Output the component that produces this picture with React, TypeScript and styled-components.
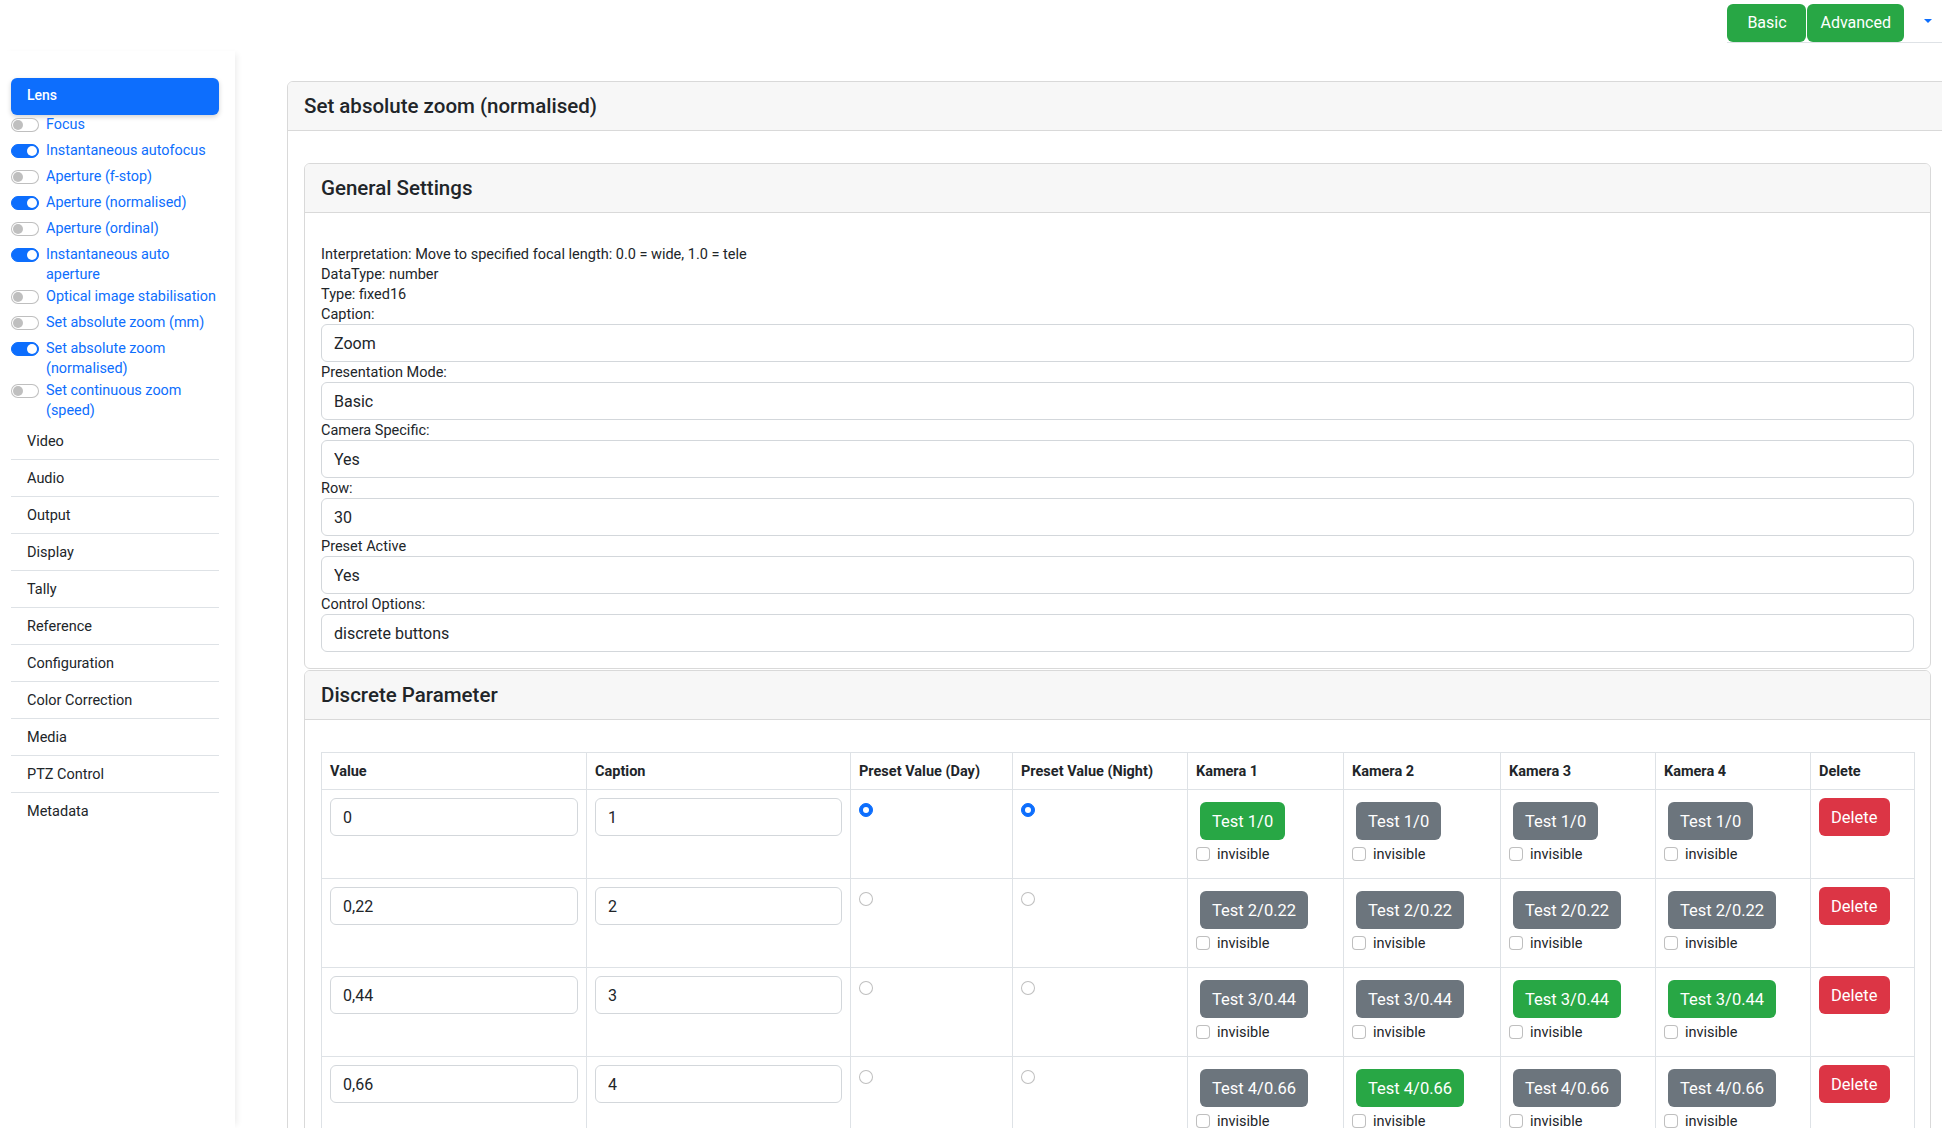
import React from "react";
import styled, { createGlobalStyle } from "styled-components";

const GlobalStyle = createGlobalStyle`
  html, body {
    margin: 0;
    padding: 0;
    overflow: hidden;
    background: #fff;
  }
  body {
    font-family: Roboto, "Liberation Sans", Arial, sans-serif;
    color: #212529;
  }
  * {
    box-sizing: border-box;
  }
`;

const TopBar = styled.header`
  display: flex;
  justify-content: flex-end;
  height: 51px;
`;

const ModeGroup = styled.div`
  display: flex;
  align-items: flex-start;
  gap: 1px;
  height: 43px;
  padding-top: 4px;
  border-bottom: 1px solid #dee2e6;
`;

const ModeButton = styled.button`
  height: 38px;
  min-width: 79px;
  padding: 0 13px;
  border: 0;
  border-radius: 6px;
  background: #28a745;
  color: #fff;
  font: 400 16px/1 Roboto, sans-serif;
`;

const CaretToggle = styled.span`
  display: flex;
  align-items: center;
  height: 34px;
  padding: 0 10px 0 19px;
  &::after {
    content: "";
    border-top: 4px solid #0d6efd;
    border-left: 4px solid transparent;
    border-right: 4px solid transparent;
  }
`;

const Layout = styled.div`
  display: flex;
  align-items: flex-start;
`;

const Sidebar = styled.aside`
  flex: none;
  width: 235px;
  min-height: calc(100vh - 51px);
  padding: 27px 16px 0 11px;
  box-shadow: 5px 0 6px -3px rgba(0, 0, 0, 0.07);
`;

const ActiveSection = styled.div`
  height: 37px;
  line-height: 35px;
  padding: 0 16px 2px;
  border-radius: 6px;
  background: #0d6efd;
  color: #fff;
  font-size: 14px;
  font-weight: 500;
  box-shadow: 0 2px 5px rgba(0, 0, 0, 0.18);
`;

const SwitchRow = styled.label`
  display: flex;
  align-items: flex-start;
  gap: 7px;
  min-height: 24px;
  margin-bottom: 2px;
  font-size: 14.4px;
  line-height: 20px;
  color: #0d6efd;
`;

const Switch = styled.span<{ $on: boolean }>`
  flex: none;
  display: flex;
  align-items: center;
  justify-content: ${(p) => (p.$on ? "flex-end" : "flex-start")};
  width: 28px;
  height: 14px;
  margin-top: 3px;
  padding: 0 1px;
  border-radius: 7px;
  border: 1px solid ${(p) => (p.$on ? "#0d6efd" : "rgba(0,0,0,.25)")};
  background: ${(p) => (p.$on ? "#0d6efd" : "#fff")};
  &::after {
    content: "";
    width: 10px;
    height: 10px;
    border-radius: 50%;
    background: ${(p) => (p.$on ? "#fff" : "rgba(0,0,0,.25)")};
  }
`;

const NavList = styled.div`
  margin-top: 2px;
`;

const NavItem = styled.div`
  display: flex;
  align-items: center;
  height: 37px;
  padding-left: 16px;
  font-size: 14.5px;
  border-bottom: 1px solid #dee2e6;
  &:last-child {
    border-bottom: 0;
  }
`;

const Main = styled.main`
  flex: none;
  padding: 30px 0 0 52px;
`;

const Card = styled.section<{ $width?: number; $gap?: number }>`
  width: ${(p) => (p.$width ? `${p.$width}px` : "auto")};
  margin-top: ${(p) => p.$gap ?? 0}px;
  border: 1px solid #d9d9d9;
  border-radius: 6px;
  background: #fff;
`;

const CardHeader = styled.div`
  padding: 12px 16px;
  border-bottom: 1px solid #d9d9d9;
  border-radius: 5px 5px 0 0;
  background: #f7f7f7;
  font-size: 20.5px;
  font-weight: 500;
  line-height: 24px;
`;

const CardBody = styled.div<{ $top?: number }>`
  padding: ${(p) => p.$top ?? 16}px 16px 16px;
`;

const InfoBlock = styled.div`
  padding-top: 1px;
  margin-bottom: -1px;
`;

const InfoLine = styled.div`
  font-size: 14.5px;
  line-height: 20px;
`;

const FieldLabel = styled.label`
  display: block;
  padding-top: 2px;
  font-size: 14.5px;
  line-height: 18px;
`;

const TextInput = styled.input`
  display: block;
  width: 100%;
  height: 38px;
  padding: 0 12px;
  border: 1px solid #d3d7db;
  border-radius: 6px;
  background: #fff;
  color: #212529;
  font: 400 16px Roboto, sans-serif;
`;

const Table = styled.table`
  width: 100%;
  border-collapse: collapse;
  table-layout: fixed;
  font-size: 14.5px;
`;

const Th = styled.th<{ $w: number }>`
  width: ${(p) => p.$w}px;
  padding: 9px 8px 7px;
  line-height: 20px;
  text-align: left;
  font-weight: 700;
  border: 1px solid #dee2e6;
`;

const Row = styled.tr`
  height: 89px;
`;

const Td = styled.td`
  vertical-align: top;
  padding: 8px;
  border: 1px solid #dee2e6;
`;

const Radio = styled.span<{ $on: boolean }>`
  display: flex;
  align-items: center;
  justify-content: center;
  width: 14px;
  height: 14px;
  margin-top: 5px;
  border-radius: 50%;
  border: 1px solid ${(p) => (p.$on ? "#0d6efd" : "rgba(0,0,0,.25)")};
  background: ${(p) => (p.$on ? "#0d6efd" : "#fff")};
  &::after {
    content: "";
    display: ${(p) => (p.$on ? "block" : "none")};
    width: 6px;
    height: 6px;
    border-radius: 50%;
    background: #fff;
  }
`;

const variants = {
  success: "#28a745",
  secondary: "#6c757d",
  danger: "#dc3545",
};

const Btn = styled.button<{ $variant: keyof typeof variants; $spaced?: boolean }>`
  display: block;
  height: 38px;
  margin: ${(p) => (p.$spaced ? "4px" : "0")};
  padding: 0 12px;
  border: 0;
  border-radius: 6px;
  background: ${(p) => variants[p.$variant]};
  color: #fff;
  font: 400 16.5px Roboto, sans-serif;
  white-space: nowrap;
`;

const CheckLine = styled.label`
  display: flex;
  align-items: center;
  gap: 7px;
  height: 20px;
  font-size: 14.5px;
`;

const CheckBox = styled.span`
  flex: none;
  width: 14px;
  height: 14px;
  border: 1px solid rgba(0, 0, 0, 0.25);
  border-radius: 4px;
  background: #fff;
`;

const lensItems = [
  { name: "Focus", on: false },
  { name: "Instantaneous autofocus", on: true },
  { name: "Aperture (f-stop)", on: false },
  { name: "Aperture (normalised)", on: true },
  { name: "Aperture (ordinal)", on: false },
  { name: "Instantaneous auto aperture", on: true },
  { name: "Optical image stabilisation", on: false },
  { name: "Set absolute zoom (mm)", on: false },
  { name: "Set absolute zoom (normalised)", on: true },
  { name: "Set continuous zoom (speed)", on: false },
];

const sections = [
  "Video",
  "Audio",
  "Output",
  "Display",
  "Tally",
  "Reference",
  "Configuration",
  "Color Correction",
  "Media",
  "PTZ Control",
  "Metadata",
];

const fields = [
  { label: "Caption:", value: "Zoom" },
  { label: "Presentation Mode:", value: "Basic" },
  { label: "Camera Specific:", value: "Yes" },
  { label: "Row:", value: "30" },
  { label: "Preset Active", value: "Yes" },
  { label: "Control Options:", value: "discrete buttons" },
];

const columns = [
  { name: "Value", w: 265 },
  { name: "Caption", w: 264 },
  { name: "Preset Value (Day)", w: 162 },
  { name: "Preset Value (Night)", w: 175 },
  { name: "Kamera 1", w: 156 },
  { name: "Kamera 2", w: 157 },
  { name: "Kamera 3", w: 155 },
  { name: "Kamera 4", w: 155 },
  { name: "Delete", w: 104 },
];

const params = [
  { value: "0", caption: "1", label: "Test 1/0", day: true, night: true, active: [0] },
  { value: "0,22", caption: "2", label: "Test 2/0.22", day: false, night: false, active: [] as number[] },
  { value: "0,44", caption: "3", label: "Test 3/0.44", day: false, night: false, active: [2, 3] },
  { value: "0,66", caption: "4", label: "Test 4/0.66", day: false, night: false, active: [1] },
];

export default function App() {
  return (
    <>
      <GlobalStyle />
      <TopBar>
        <ModeGroup>
          <ModeButton>Basic</ModeButton>
          <ModeButton>Advanced</ModeButton>
          <CaretToggle />
        </ModeGroup>
      </TopBar>
      <Layout>
        <Sidebar>
          <ActiveSection>Lens</ActiveSection>
          {lensItems.map((item) => (
            <SwitchRow key={item.name}>
              <Switch $on={item.on} />
              <span>{item.name}</span>
            </SwitchRow>
          ))}
          <NavList>
            {sections.map((s) => (
              <NavItem key={s}>{s}</NavItem>
            ))}
          </NavList>
        </Sidebar>
        <Main>
          <Card $width={1661}>
            <CardHeader>Set absolute zoom (normalised)</CardHeader>
            <CardBody>
              <Card $gap={16}>
                <CardHeader>General Settings</CardHeader>
                <CardBody $top={31}>
                  <InfoBlock>
                    <InfoLine>Interpretation: Move to specified focal length: 0.0 = wide, 1.0 = tele</InfoLine>
                    <InfoLine>DataType: number</InfoLine>
                    <InfoLine>Type: fixed16</InfoLine>
                  </InfoBlock>
                  {fields.map((f) => (
                    <div key={f.label}>
                      <FieldLabel>{f.label}</FieldLabel>
                      <TextInput defaultValue={f.value} readOnly />
                    </div>
                  ))}
                </CardBody>
              </Card>
              <Card $gap={1}>
                <CardHeader>Discrete Parameter</CardHeader>
                <CardBody $top={32}>
                  <Table>
                    <thead>
                      <tr>
                        {columns.map((c) => (
                          <Th key={c.name} $w={c.w}>
                            {c.name}
                          </Th>
                        ))}
                      </tr>
                    </thead>
                    <tbody>
                      {params.map((p) => (
                        <Row key={p.value}>
                          <Td>
                            <TextInput defaultValue={p.value} readOnly />
                          </Td>
                          <Td>
                            <TextInput defaultValue={p.caption} readOnly />
                          </Td>
                          <Td>
                            <Radio $on={p.day} />
                          </Td>
                          <Td>
                            <Radio $on={p.night} />
                          </Td>
                          {[0, 1, 2, 3].map((cam) => (
                            <Td key={cam}>
                              <Btn $spaced $variant={p.active.includes(cam) ? "success" : "secondary"}>
                                {p.label}
                              </Btn>
                              <CheckLine>
                                <CheckBox />
                                invisible
                              </CheckLine>
                            </Td>
                          ))}
                          <Td>
                            <Btn $variant="danger">Delete</Btn>
                          </Td>
                        </Row>
                      ))}
                    </tbody>
                  </Table>
                </CardBody>
              </Card>
            </CardBody>
          </Card>
        </Main>
      </Layout>
    </>
  );
}
